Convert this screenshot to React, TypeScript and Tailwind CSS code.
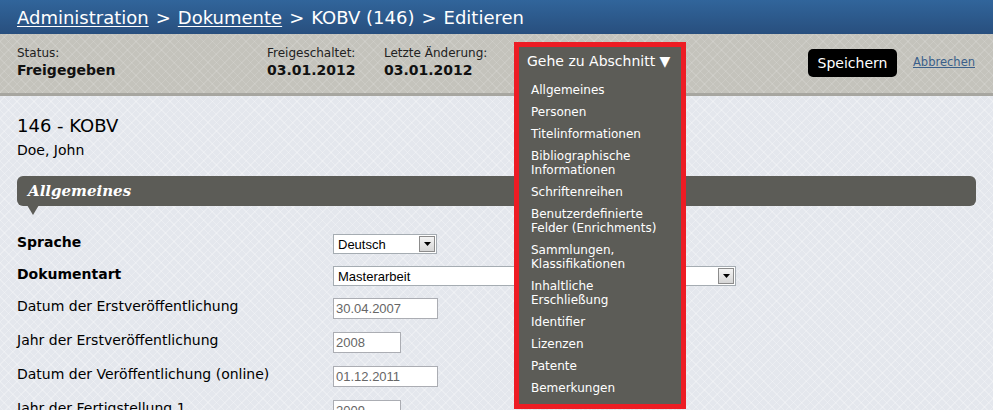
import React from 'react'

const sections = [
  ['Allgemeines'],
  ['Personen'],
  ['Titelinformationen'],
  ['Bibliographische', 'Informationen'],
  ['Schriftenreihen'],
  ['Benutzerdefinierte', 'Felder (Enrichments)'],
  ['Sammlungen,', 'Klassifikationen'],
  ['Inhaltliche', 'Erschließung'],
  ['Identifier'],
  ['Lizenzen'],
  ['Patente'],
  ['Bemerkungen'],
]

function Select({ value, width }: { value: string; width: string }) {
  return (
    <div className={`flex h-[20px] items-center border border-[#a5acb2] bg-white ${width}`}>
      <span className="flex-1 pl-[4px] font-['Liberation_Sans',Arial,sans-serif] text-[13px] leading-none text-black">{value}</span>
      <span className="m-[1px] flex h-[16px] w-[16px] items-center justify-center border border-[#8c8c8c] bg-gradient-to-b from-[#f4f4f4] to-[#d6d6d6]">
        <svg width="7" height="4" viewBox="0 0 7 4"><path d="M0 0h7L3.5 4z" fill="#000" /></svg>
      </span>
    </div>
  )
}

function TextInput({ value, width }: { value: string; width: string }) {
  return (
    <div className={`flex h-[21px] items-center border border-[#abadb3] bg-white pl-[2px] font-['Liberation_Sans',Arial,sans-serif] text-[13px] text-[#666] ${width}`}>
      {value}
    </div>
  )
}

export default function App() {
  const rows = [
    { label: 'Sprache', bold: true, h: 'h-[32px]', field: <Select value="Deutsch" width="w-[104px]" /> },
    { label: 'Dokumentart', bold: true, h: 'h-[32px]', field: <Select value="Masterarbeit" width="w-[403px]" /> },
    { label: 'Datum der Erstveröffentlichung', h: 'h-[34px]', field: <TextInput value="30.04.2007" width="w-[105px]" /> },
    { label: 'Jahr der Erstveröffentlichung', h: 'h-[34px]', field: <TextInput value="2008" width="w-[68px]" /> },
    { label: 'Datum der Veröffentlichung (online)', h: 'h-[34px]', field: <TextInput value="01.12.2011" width="w-[105px]" /> },
    { label: 'Jahr der Fertigstellung 1', h: 'h-[34px]', field: <TextInput value="2009" width="w-[68px]" /> },
  ]

  return (
    <div className="relative h-[410px] w-[993px] overflow-hidden bg-[#e4e7ed] font-['DejaVu_Sans',Verdana,sans-serif]">
      <div className="flex h-[34px] items-center bg-gradient-to-b from-[#31659b] to-[#284f7e] pl-[17px] text-[18px] text-white">
        <span className="underline underline-offset-2">Administration</span>
        <span className="mx-[7px]">&gt;</span>
        <span className="underline underline-offset-2">Dokumente</span>
        <span className="mx-[7px]">&gt;</span>
        <span>KOBV (146)</span>
        <span className="mx-[7px]">&gt;</span>
        <span>Editieren</span>
      </div>

      <div className="flex h-[62px] items-start border-b-[3px] border-[#a7a6a0] bg-[#c4c3bc] bg-[repeating-linear-gradient(45deg,rgba(255,255,255,0.12)_0_1px,transparent_1px_6px),repeating-linear-gradient(-45deg,rgba(255,255,255,0.12)_0_1px,transparent_1px_6px)] pl-[17px] pr-[18px] pt-[12px]">
        <div className="w-[250px]">
          <div className="text-[12px] leading-[15px] text-[#222]">Status:</div>
          <div className="text-[14px] font-bold leading-[18px] text-[#111]">Freigegeben</div>
        </div>
        <div className="w-[117px]">
          <div className="text-[12px] leading-[15px] text-[#222]">Freigeschaltet:</div>
          <div className="text-[14px] font-bold leading-[18px] text-[#111]">03.01.2012</div>
        </div>
        <div>
          <div className="text-[12px] leading-[15px] text-[#222]">Letzte Änderung:</div>
          <div className="text-[14px] font-bold leading-[18px] text-[#111]">03.01.2012</div>
        </div>
        <div className="ml-auto mt-[3px] flex items-center gap-[16px]">
          <button className="h-[28px] w-[89px] rounded-[5px] bg-black text-[14px] text-white">Speichern</button>
          <a className="text-[11.5px] text-[#3a5f8a] underline">Abbrechen</a>
        </div>
      </div>

      <div className="bg-[repeating-linear-gradient(45deg,rgba(255,255,255,0.25)_0_1px,transparent_1px_6px),repeating-linear-gradient(-45deg,rgba(255,255,255,0.25)_0_1px,transparent_1px_6px)] px-[17px] pt-[18px]">
        <div className="text-[18px] leading-[24px] text-black">146 - KOBV</div>
        <div className="mt-[3px] text-[14px] leading-[18px] text-black">Doe, John</div>

        <div className="relative mt-[17px] flex h-[30px] items-center rounded-[6px] bg-[#5c5c57] pl-[11px]">
          <span className="font-['DejaVu_Serif',Georgia,serif] text-[15px] font-bold italic text-white">Allgemeines</span>
          <span className="absolute left-[10px] top-[29px] h-0 w-0 border-x-[6px] border-t-[10px] border-x-transparent border-t-[#5c5c57]" />
        </div>

        <div className="mt-[27px]">
          {rows.map((r) => (
            <div key={r.label} className={`flex items-start ${r.h}`}>
              <div className={`w-[316px] pt-[1px] text-[14px] leading-[16px] text-black ${r.bold ? 'font-bold' : ''}`}>{r.label}</div>
              <div className="pt-[1px]">{r.field}</div>
            </div>
          ))}
        </div>
      </div>

      <div className="absolute left-[514px] top-[42px] h-[367px] w-[172px] border-[5px] border-[#ed1c24] bg-[#5c5c57] text-white">
        <div className="pl-[8px] pt-[5px] text-[14px] leading-[18px]">Gehe zu Abschnitt ▼</div>
        <ul className="mt-[13px] flex flex-col gap-[8px] pl-[12px] text-[12px] leading-[14px]">
          {sections.map((s) => (
            <li key={s[0]}>
              {s.map((l) => (
                <div key={l}>{l}</div>
              ))}
            </li>
          ))}
        </ul>
      </div>
    </div>
  )
}
